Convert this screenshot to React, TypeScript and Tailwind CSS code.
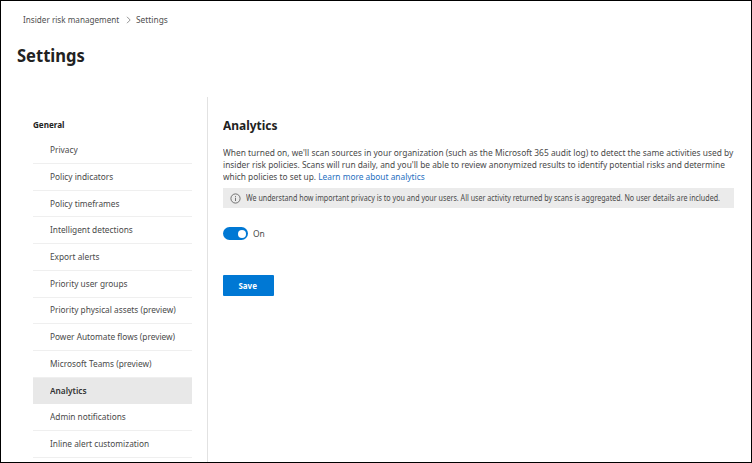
const navItems = [
  'Privacy',
  'Policy indicators',
  'Policy timeframes',
  'Intelligent detections',
  'Export alerts',
  'Priority user groups',
  'Priority physical assets (preview)',
  'Power Automate flows (preview)',
  'Microsoft Teams (preview)',
  'Analytics',
  'Admin notifications',
  'Inline alert customization',
];

function Breadcrumb() {
  return (
    <nav className="flex h-4 items-center text-[9px] whitespace-nowrap text-[#505050]">
      <span className="w-[103px] shrink-0">
        <span className="inline-block origin-left scale-x-[0.905]">Insider risk management</span>
      </span>
      <svg className="h-2 w-1.5" viewBox="0 0 6 8" fill="none" stroke="#777" strokeWidth="0.8">
        <path d="M1 0.8 4.2 4 1 7.2" />
      </svg>
      <span className="ml-1 inline-block origin-left scale-x-[0.93]">Settings</span>
    </nav>
  );
}

function Sidebar() {
  return (
    <aside className="w-[206.5px] shrink-0 border-r border-[#e2e2e2] pl-8 pt-[19px]">
      <h2 className="h-[21.2px] origin-left scale-x-[0.9] text-[9px] leading-[17px] font-bold text-[#222]">General</h2>
      <ul className="w-[159px]">
        {navItems.map((item) => (
          <li
            key={item}
            className={`flex h-[26.73px] items-center pl-[17px] whitespace-nowrap text-[9.2px] ${
              item === 'Analytics'
                ? 'bg-[#e8e8e8] font-semibold text-[#333]'
                : 'border-b border-[#efefef] text-[#4a4a4a]'
            }`}
          >
            <span className="inline-block origin-left scale-x-[0.903]">{item}</span>
          </li>
        ))}
      </ul>
    </aside>
  );
}

function Toggle() {
  return (
    <div className="mt-[19px] flex h-[13px] items-center gap-[5px]">
      <span className="flex h-[13px] w-[25px] items-center justify-end rounded-full bg-[#0078d4] pr-[2px]">
        <span className="h-2 w-2 rounded-full bg-white" />
      </span>
      <span className="inline-block origin-left scale-x-[0.92] text-[9.2px] text-[#4a4a4a]">On</span>
    </div>
  );
}

function Analytics() {
  return (
    <main className="pl-[15px] pt-[17px] whitespace-nowrap">
      <h2 className="origin-left scale-x-[0.92] text-[13px] leading-[22px] font-bold text-[#222]">Analytics</h2>
      <div className="mt-[11px] w-[511px] text-[9.2px] leading-3 text-[#4a4a4a]">
        <p className="origin-left scale-x-[0.9135]">When turned on, we'll scan sources in your organization (such as the Microsoft 365 audit log) to detect the same activities used by</p>
        <p className="origin-left scale-x-[0.909]">insider risk policies. Scans will run daily, and you'll be able to review anonymized results to identify potential risks and determine</p>
        <p className="origin-left scale-x-[0.905]">
          which policies to set up. <a className="text-[#1f70c1]">Learn more about analytics</a>
        </p>
      </div>
      <div className="mt-[5px] flex h-5 w-[511px] items-center gap-[5px] bg-[#ebebeb] pl-[7px] text-[8px] text-[#4a4a4a]">
        <svg className="h-[11px] w-[11px] shrink-0" viewBox="0 0 11 11" fill="none" stroke="#555" strokeWidth="0.8">
          <circle cx="5.5" cy="5.5" r="4.6" />
          <path d="M5.5 4.7V8M5.5 3v0.9" />
        </svg>
        <span className="inline-block origin-left scale-x-[0.8925]">We understand how important privacy is to you and your users. All user activity returned by scans is aggregated. No user details are included.</span>
      </div>
      <Toggle />
      <button className="mt-[35px] flex h-[21px] w-[51px] items-center justify-center rounded-[1px] bg-[#0078d4] text-[9.2px] font-bold text-white">
        <span className="inline-block scale-x-[0.87]">Save</span>
      </button>
    </main>
  );
}

export default function App() {
  return (
    <div className="flex h-[463px] w-[752px] flex-col overflow-hidden border border-black bg-white font-['Noto_Sans',sans-serif]">
      <header className="h-24 shrink-0 pt-[11px] pl-[21.5px]">
        <Breadcrumb />
        <h1 className="mt-[13px] -ml-[5.5px] origin-left scale-x-[0.945] text-[17.5px] leading-[28px] font-bold text-[#222]">Settings</h1>
      </header>
      <div className="flex min-h-0 flex-1">
        <Sidebar />
        <Analytics />
      </div>
    </div>
  );
}
